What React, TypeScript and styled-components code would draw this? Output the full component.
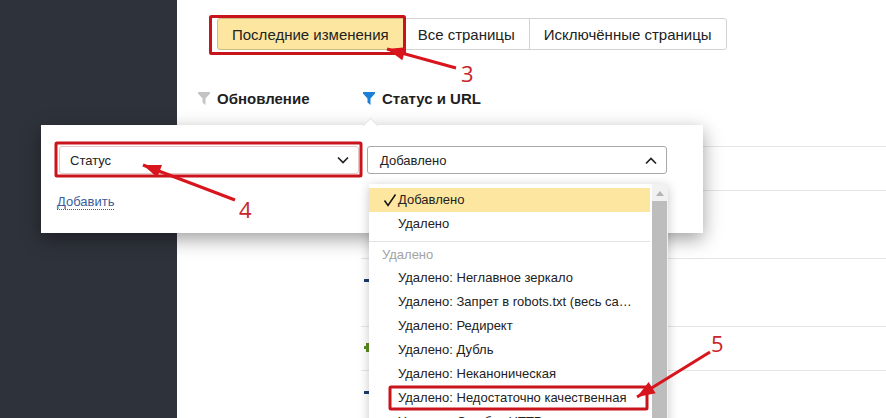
import React from "react";
import styled, { createGlobalStyle } from "styled-components";

const GlobalStyle = createGlobalStyle`
  html, body {
    margin: 0;
    padding: 0;
    background: #fff;
    font-family: "Liberation Sans", Arial, sans-serif;
    color: #222;
  }
`;

const Page = styled.div`
  position: relative;
  display: flex;
  width: 886px;
  height: 418px;
  overflow: hidden;
  background: #fff;
`;

const Sidebar = styled.aside`
  flex: 0 0 177px;
  background: #2e323a;
`;

const Main = styled.main`
  flex: 1;
  min-width: 0;
  padding-top: 18px;
`;

const Tabs = styled.div`
  display: flex;
  margin-left: 40px;
`;

const Tab = styled.div<{ $active?: boolean }>`
  box-sizing: border-box;
  height: 32px;
  padding: 0 14px;
  display: flex;
  align-items: center;
  font-size: 15px;
  white-space: nowrap;
  margin-left: -1px;
  border: 1px solid ${(p) => (p.$active ? "#cdbd85" : "#d2d2d2")};
  background: ${(p) => (p.$active ? "#fde7a0" : "#fff")};
  &:first-child {
    margin-left: 0;
    border-radius: 3px 0 0 3px;
  }
  &:last-child {
    border-radius: 0 3px 3px 0;
  }
`;

const FilterHeads = styled.div`
  display: flex;
  margin: 39px 0 0 21px;
  height: 18px;
`;

const FilterHead = styled.div<{ $width: number }>`
  display: flex;
  align-items: center;
  gap: 7px;
  width: ${(p) => p.$width}px;
  font-size: 15px;
  font-weight: 700;
  color: #1f1f1f;
`;

const Rows = styled.div`
  margin: 39px 0 0 184px;
`;

const Row = styled.div<{ $height: number }>`
  box-sizing: border-box;
  height: ${(p) => p.$height}px;
  border-top: 1px solid #e6e6e6;
  padding-left: 3px;
`;

const Sign = styled.span<{ $kind: "plus" | "minus"; $top: number }>`
  position: relative;
  display: block;
  width: 7px;
  height: 3px;
  margin-top: ${(p) => p.$top}px;
  background: ${(p) => (p.$kind === "plus" ? "#5b8c1f" : "#1e3b6d")};

  &::after {
    content: "";
    display: ${(p) => (p.$kind === "plus" ? "block" : "none")};
    position: absolute;
    left: 2px;
    top: -3px;
    width: 3px;
    height: 9px;
    background: #5b8c1f;
  }
`;

const Popup = styled.div`
  position: absolute;
  left: 41px;
  top: 125px;
  box-sizing: border-box;
  width: 662px;
  height: 108px;
  padding: 21px 0 0 16px;
  background: #fff;
  box-shadow: 0 6px 18px rgba(0, 0, 0, 0.38);
`;

const Notch = styled.span`
  position: absolute;
  left: 324px;
  top: -5px;
  width: 10px;
  height: 10px;
  background: #fff;
  border-top: 1px solid #e4e4e4;
  border-left: 1px solid #e4e4e4;
  transform: rotate(45deg);
`;

const Selects = styled.div`
  display: flex;
  gap: 8px;
  padding-left: 2px;
`;

const Select = styled.div<{ $muted?: boolean }>`
  box-sizing: border-box;
  width: 300px;
  height: 28px;
  padding: 0 8px 0 ${(p) => (p.$muted ? 10 : 12)}px;
  display: flex;
  align-items: center;
  justify-content: space-between;
  font-size: 13px;
  border-radius: 3px;
  border: 1px solid ${(p) => (p.$muted ? "#e4c9c9" : "#a9a9a9")};
`;

const AddLink = styled.a`
  display: inline-block;
  margin-top: 20px;
  font-size: 13px;
  line-height: 15px;
  color: #3b5c9c;
  border-bottom: 1px dotted #3b5c9c;
`;

const Dropdown = styled.div`
  position: absolute;
  left: 369px;
  top: 184px;
  display: flex;
  width: 299px;
  height: 260px;
  background: #fff;
  box-shadow: 0 2px 10px rgba(0, 0, 0, 0.22);
`;

const List = styled.div`
  flex: 0 0 281px;
  width: 281px;
  padding-top: 4px;
`;

const Item = styled.div<{ $selected?: boolean }>`
  position: relative;
  box-sizing: border-box;
  height: 24px;
  line-height: 23px;
  padding: 0 18px 0 29px;
  font-size: 13px;
  white-space: nowrap;
  overflow: hidden;
  text-overflow: ellipsis;
  background: ${(p) => (p.$selected ? "#fde7a0" : "transparent")};
`;

const CheckMark = styled.svg`
  position: absolute;
  left: 14px;
  top: 5px;
`;

const Divider = styled.div`
  height: 1px;
  margin-top: 5px;
  background: #e2e2e2;
`;

const GroupTitle = styled.div`
  height: 24px;
  line-height: 26px;
  padding-left: 13px;
  font-size: 13px;
  color: #a3a3a3;
`;

const Scrollbar = styled.div`
  position: relative;
  flex: 0 0 16px;
  margin-left: 2px;
  padding-top: 17px;
  background: #f1f1f1;
`;

const ScrollArrow = styled.span`
  position: absolute;
  left: 4px;
  top: 7px;
  border-left: 4px solid transparent;
  border-right: 4px solid transparent;
  border-bottom: 5px solid #b4b4b4;
`;

const ScrollThumb = styled.div`
  height: 240px;
  margin-right: 1px;
  background: #bdbdbd;
`;

const Annotations = styled.svg`
  position: absolute;
  left: 0;
  top: 0;
  pointer-events: none;
`;

const Callout = styled.span<{ $x: number; $y: number }>`
  position: absolute;
  left: ${(p) => p.$x}px;
  top: ${(p) => p.$y}px;
  font-family: "Open Sans", sans-serif;
  font-size: 22px;
  line-height: 24px;
  color: #c9252b;
`;

const Chevron = ({ up }: { up?: boolean }) => (
  <svg width="14" height="9" viewBox="0 0 14 9" fill="none">
    <path
      d={up ? "M2 7.5 7 2.5 12 7.5" : "M2 1.5 7 6.5 12 1.5"}
      stroke="#222"
      strokeWidth="1.7"
    />
  </svg>
);

const Funnel = ({ color }: { color: string }) => (
  <svg width="12" height="13" viewBox="0 0 12 13">
    <path d="M0 0H12V1.5L7.5 6.5V13L4.5 10.5V6.5L0 1.5Z" fill={color} />
  </svg>
);

const Arrow = ({ x1, y1, x2, y2 }: { x1: number; y1: number; x2: number; y2: number }) => {
  const angle = Math.atan2(y2 - y1, x2 - x1);
  const len = 19;
  const spread = 0.36;
  const a = [x2 - len * Math.cos(angle - spread), y2 - len * Math.sin(angle - spread)];
  const b = [x2 - len * Math.cos(angle + spread), y2 - len * Math.sin(angle + spread)];
  return (
    <g>
      <line x1={x1} y1={y1} x2={x2} y2={y2} stroke="#d8141c" strokeWidth="3" />
      <polygon points={`${x2},${y2} ${a[0]},${a[1]} ${b[0]},${b[1]}`} fill="#d8141c" />
    </g>
  );
};

const tabs = ["Последние изменения", "Все страницы", "Исключённые страницы"];

const removedReasons = [
  "Удалено: Неглавное зеркало",
  "Удалено: Запрет в robots.txt (весь сайт)",
  "Удалено: Редирект",
  "Удалено: Дубль",
  "Удалено: Неканоническая",
  "Удалено: Недостаточно качественная",
  "Удалено: Ошибка HTTP",
];

const App: React.FC = () => {
  return (
    <Page>
      <GlobalStyle />
      <Sidebar />
      <Main>
        <Tabs>
          {tabs.map((tab, index) => (
            <Tab key={tab} $active={index === 0}>
              {tab}
            </Tab>
          ))}
        </Tabs>
        <FilterHeads>
          <FilterHead $width={165}>
            <Funnel color="#c4c4c4" />
            Обновление
          </FilterHead>
          <FilterHead $width={200}>
            <Funnel color="#1a7fd6" />
            Статус и URL
          </FilterHead>
        </FilterHeads>
        <Rows>
          <Row $height={44} />
          <Row $height={68} />
          <Row $height={68}>
            <Sign $kind="minus" $top={20} />
          </Row>
          <Row $height={44}>
            <Sign $kind="plus" $top={19} />
          </Row>
          <Row $height={48}>
            <Sign $kind="minus" $top={20} />
          </Row>
        </Rows>
      </Main>

      <Popup>
        <Notch />
        <Selects>
          <Select $muted>
            Статус
            <Chevron />
          </Select>
          <Select>
            Добавлено
            <Chevron up />
          </Select>
        </Selects>
        <AddLink>Добавить</AddLink>
      </Popup>

      <Dropdown>
        <List>
          <Item $selected>
            <CheckMark width="14" height="14" viewBox="0 0 14 14" fill="none">
              <path d="M1.5 7.5 5 12.5 12.5 1.5" stroke="#111" strokeWidth="1.5" />
            </CheckMark>
            Добавлено
          </Item>
          <Item>Удалено</Item>
          <Divider />
          <GroupTitle>Удалено</GroupTitle>
          {removedReasons.map((reason) => (
            <Item key={reason}>{reason}</Item>
          ))}
        </List>
        <Scrollbar>
          <ScrollArrow />
          <ScrollThumb />
        </Scrollbar>
      </Dropdown>

      <Annotations width="886" height="418" fill="none">
        <rect x="210.5" y="16.5" width="194" height="37" rx="1" stroke="#c9141c" strokeWidth="3" />
        <rect x="56" y="143" width="305" height="33" rx="1" stroke="#c9141c" strokeWidth="3" />
        <rect x="390" y="387" width="257" height="22" rx="1" stroke="#c9141c" strokeWidth="3" />
        <Arrow x1={456} y1={68} x2={387} y2={49} />
        <Arrow x1={235} y1={200} x2={143} y2={165} />
        <Arrow x1={710} y1={352} x2={637} y2={397} />
      </Annotations>
      <Callout $x={461} $y={61}>3</Callout>
      <Callout $x={239} $y={197}>4</Callout>
      <Callout $x={711} $y={331}>5</Callout>
    </Page>
  );
};

export default App;
